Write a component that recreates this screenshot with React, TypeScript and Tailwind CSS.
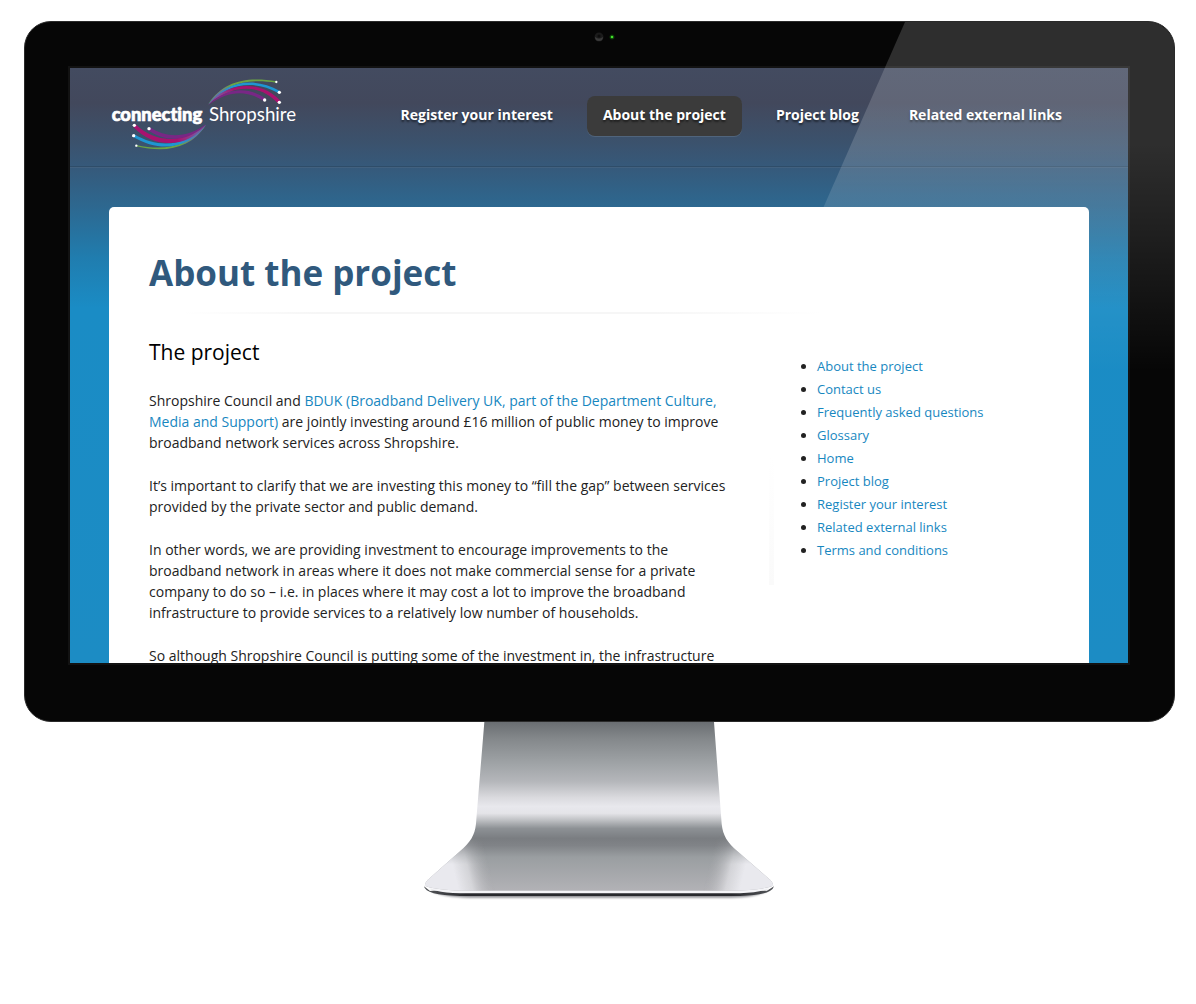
import React from "react";

const navItems = [
  { label: "Register your interest", active: false },
  { label: "About the project", active: true },
  { label: "Project blog", active: false },
  { label: "Related external links", active: false },
];

const sideLinks = [
  "About the project",
  "Contact us",
  "Frequently asked questions",
  "Glossary",
  "Home",
  "Project blog",
  "Register your interest",
  "Related external links",
  "Terms and conditions",
];

function Logo() {
  return (
    <svg viewBox="0 0 630 270" className="h-[90px] w-[210px] shrink-0" role="img" aria-label="connecting Shropshire">
      <defs>
        <linearGradient id="upper" gradientUnits="userSpaceOnUse" x1="325" y1="110" x2="400" y2="60">
          <stop offset="0" stopColor="#6a6d9c" />
          <stop offset="0.4" stopColor="#6c6aa8" stopOpacity="0.8" />
          <stop offset="1" stopColor="#6c6aa8" stopOpacity="0" />
        </linearGradient>
        <linearGradient id="lower" gradientUnits="userSpaceOnUse" x1="318" y1="170" x2="235" y2="225">
          <stop offset="0" stopColor="#6a5e98" />
          <stop offset="0.35" stopColor="#6c6aa8" stopOpacity="0.8" />
          <stop offset="1" stopColor="#6c6aa8" stopOpacity="0" />
        </linearGradient>
      </defs>
      <path d="M325 108 C372 38 440 26 530 40 L529 44 C445 31 378 44 325 108Z" fill="#6ba544" />
      <path d="M325 109 C372 44 455 22 540 69 L536 76 C460 32 380 48 325 109Z" fill="#1e96d2" />
      <path d="M325 110 C375 46 475 30 541 98 L534 106 C475 42 392 52 325 110Z" fill="#a8126f" />
      <path d="M325 111 C378 60 440 52 496 91 L491 99 C440 66 388 66 325 111Z" fill="#782785" />
      <path d="M325 110 C350 74 375 52 400 46 L400 70 C375 74 350 86 325 110Z" fill="url(#upper)" />
      <path d="M318 172 C270 242 200 256 108 235 L109 231 C195 250 262 236 318 172Z" fill="#6ba544" />
      <path d="M318 171 C272 238 185 258 98 206 L103 199 C180 245 262 232 318 171Z" fill="#1e96d2" />
      <path d="M318 170 C268 234 170 250 100 177 L107 169 C170 230 250 224 318 170Z" fill="#a8126f" />
      <path d="M318 169 C270 220 200 226 143 186 L150 178 C200 212 262 210 318 169Z" fill="#782785" />
      <path d="M318 170 C295 205 265 228 235 236 L235 213 C265 208 292 194 318 170Z" fill="url(#lower)" />
      <g fill="#fff">
        <circle cx="529" cy="42" r="3.5" />
        <circle cx="538" cy="73" r="5" />
        <circle cx="538" cy="103" r="5" />
        <circle cx="494" cy="96" r="5" />
        <circle cx="103" cy="172" r="5" />
        <circle cx="147" cy="182" r="5" />
        <circle cx="101" cy="203" r="5" />
        <circle cx="109" cy="233" r="3.5" />
        <text
          x="35"
          y="159"
          stroke="#fff"
          strokeWidth="2"
          className="font-['Lato',sans-serif] text-[55px] font-black [font-variant-ligatures:none]"
        >
          connecting
        </text>
        <text x="327" y="159" className="font-['Lato',sans-serif] text-[56px] font-normal">Shropshire</text>
      </g>
    </svg>
  );
}

function Camera() {
  return (
    <div className="flex h-[46px] items-start justify-center pt-[10px] pl-[11px]" aria-hidden="true">
      <svg viewBox="0 0 30 10" className="h-[10px] w-[30px]">
        <circle cx="9" cy="5" r="4.5" fill="#1b1b1b" />
        <path d="M5 5a4 4 0 0 0 8 0L10 6.500L8 6.500Z" fill="#3a3a3a" />
        <circle cx="9" cy="4" r="1.500" fill="#0c0c0c" />
        <circle cx="22" cy="5" r="2.500" fill="#0d3a08" />
        <circle cx="22" cy="5" r="1.300" fill="#43e02c" />
      </svg>
    </div>
  );
}

function Stand() {
  const outline =
    "M223 33 H912 L934 325 C936 365 945 385 972 412 L1082 508 Q1098 526 1082 540 Q1050 546 1000 546 H135 Q85 546 52 540 Q36 526 52 508 L160 412 C188 385 197 365 199 325Z";
  return (
    <svg viewBox="0 33 1140 567" className="mx-auto block h-[189px] w-[380px]" aria-hidden="true">
      <defs>
        <linearGradient id="metal" gradientUnits="userSpaceOnUse" x1="0" y1="33" x2="0" y2="540">
          <stop offset="0" stopColor="#6a6e72" />
          <stop offset="0.1" stopColor="#84888b" />
          <stop offset="0.25" stopColor="#a0a4a7" />
          <stop offset="0.35" stopColor="#b4b6ba" />
          <stop offset="0.45" stopColor="#dbdbdf" />
          <stop offset="0.5" stopColor="#e8e8ed" />
          <stop offset="0.54" stopColor="#e4e4e8" />
          <stop offset="0.58" stopColor="#bfc1c4" />
          <stop offset="0.63" stopColor="#8d9195" />
          <stop offset="0.69" stopColor="#7a7d81" />
          <stop offset="0.73" stopColor="#808387" />
          <stop offset="0.8" stopColor="#9a9ea1" />
          <stop offset="1" stopColor="#b2b2b6" />
        </linearGradient>
        <linearGradient id="leftShine" gradientUnits="userSpaceOnUse" x1="130" y1="475" x2="235" y2="450">
          <stop offset="0" stopColor="#e9e9ee" />
          <stop offset="0.4" stopColor="#dfdfe3" stopOpacity="0.8" />
          <stop offset="1" stopColor="#b0b0b4" stopOpacity="0" />
        </linearGradient>
        <linearGradient id="rightShine" gradientUnits="userSpaceOnUse" x1="1005" y1="475" x2="900" y2="450">
          <stop offset="0" stopColor="#e9e9ee" />
          <stop offset="0.4" stopColor="#dfdfe3" stopOpacity="0.8" />
          <stop offset="1" stopColor="#b0b0b4" stopOpacity="0" />
        </linearGradient>
        <linearGradient id="shineFade" gradientUnits="userSpaceOnUse" x1="0" y1="375" x2="0" y2="460">
          <stop offset="0" stopColor="#000" />
          <stop offset="1" stopColor="#fff" />
        </linearGradient>
        <mask id="shineMask">
          <rect x="0" y="370" width="1140" height="190" fill="url(#shineFade)" />
        </mask>
        <linearGradient id="edge" x1="0" y1="0" x2="1" y2="0">
          <stop offset="0" stopColor="#55575b" />
          <stop offset="0.12" stopColor="#28292d" />
          <stop offset="0.88" stopColor="#28292d" />
          <stop offset="1" stopColor="#55575b" />
        </linearGradient>
        <clipPath id="standClip">
          <path d={outline} />
        </clipPath>
        <filter id="soft" x="-5%" y="-50%" width="110%" height="200%">
          <feGaussianBlur stdDeviation="3" />
        </filter>
      </defs>
      <path d="M60 538 Q100 560 180 560 H960 Q1040 560 1075 538Z" fill="#8a8b90" filter="url(#soft)" />
      <path d="M42 526 Q46 553 150 555 H990 Q1085 553 1092 526 L1070 540 H60Z" fill="url(#edge)" />
      <path d="M46 520 Q60 545 150 547 H990 Q1080 544 1089 520Z" fill="#f4f4f7" />
      <g clipPath="url(#standClip)">
        <path d="M0 33 H1140 V524 H1090 Q1050 539 960 539 H180 Q85 539 44 524 H0Z" fill="url(#metal)" />
        <g mask="url(#shineMask)">
          <path d="M0 370 H300 V539 H180 Q85 539 44 524 H0Z" fill="url(#leftShine)" />
          <path d="M1140 370 H840 V539 H960 Q1050 539 1090 524 H1140Z" fill="url(#rightShine)" />
        </g>
      </g>
    </svg>
  );
}

export default function App() {
  return (
    <div className="min-h-screen bg-white pt-[21px] pr-[21px] pl-6 font-['Open_Sans',sans-serif]">
      <div className="relative overflow-hidden rounded-[27px] border border-[#2a2a2a] bg-[#060606] pr-[46px] pb-[58px] pl-[45px]">
        <Camera />

        <div className="aspect-[1058/595] overflow-hidden bg-[linear-gradient(#434b60_0px,#42485c_35px,#3b526d_75px,#36597a_98px,#2d6890_139px,#207daf_190px,#1a8cc5_240px,#1c8cc4_100%)] outline-2 outline-[#121212]">
          <header className="flex h-[99px] items-start justify-between border-b border-[#2f4d69] pr-[50px] pl-[30px] shadow-[0_1px_0_#42617f]">
            <Logo />
            <nav className="flex gap-[18px] pt-7">
              {navItems.map((item) => (
                <a
                  key={item.label}
                  href="#"
                  className={
                    item.active
                      ? "h-10 rounded-lg bg-[#3b3b3b] px-4 text-sm leading-[38px] font-bold whitespace-nowrap text-white shadow-[0_1px_0_#50647c] text-shadow-[0_2px_2px_rgba(0,0,0,0.5)]"
                      : "h-10 rounded-lg px-4 text-sm leading-[38px] font-bold whitespace-nowrap text-white text-shadow-[0_2px_2px_rgba(0,0,0,0.5)]"
                  }
                >
                  {item.label}
                </a>
              ))}
            </nav>
          </header>

          <main className="mx-[39px] mt-10 rounded-t-[5px] bg-white px-10 pt-[39px]">
            <h1 className="pb-3 text-[35px] leading-[54px] font-bold text-[#30597d]">About the project</h1>
            <div className="h-[2px] w-[672px] max-w-full bg-[linear-gradient(90deg,transparent_5%,#f6f6f6_25%,#f6f6f6_75%,transparent)]" />

            <div className="flex">
              <article className="w-[580px] text-sm leading-[21px] text-[#222]">
                <h2 className="mt-[22px] mb-[22px] text-[21px] leading-8 text-black">The project</h2>
                <p className="mb-[22px]">
                  Shropshire Council and{" "}
                  <a href="#" className="text-[#1787bf]">
                    BDUK (Broadband Delivery UK, part of the Department Culture, Media and Support)
                  </a>{" "}
                  are jointly investing around £16 million of public money to improve broadband network services across
                  Shropshire.
                </p>
                <p className="mb-[22px]">
                  It’s important to clarify that we are investing this money to “fill the gap” between services provided
                  by the private sector and public demand.
                </p>
                <p className="mb-[22px]">
                  In other words, we are providing investment to encourage improvements to the broadband network in
                  areas where it does not make commercial sense for a private company to do so – i.e. in places where it
                  may cost a lot to improve the broadband infrastructure to provide services to a relatively low number
                  of households.
                </p>
                <p>So although Shropshire Council is putting some of the investment in, the infrastructure</p>
              </article>

              <aside className="ml-10 flex">
                <div className="mt-[143px] h-[128px] w-[5px] bg-[linear-gradient(#ffffff,#fafafa)]" />
                <ul className="mt-[41px] ml-[43px] list-disc text-[13px] leading-[23px] text-[#222]">
                  {sideLinks.map((label) => (
                    <li key={label}>
                      <a href="#" className="text-[#1787bf]">
                        {label}
                      </a>
                    </li>
                  ))}
                </ul>
              </aside>
            </div>
          </main>
        </div>

        {/* Glass reflection across the upper right corner of the display */}
        <div className="pointer-events-none absolute top-0 right-0 h-[350px] w-[423px] bg-[linear-gradient(rgba(255,255,255,0.16)_35%,rgba(255,255,255,0.1)_60%,transparent)] [clip-path:polygon(154px_0,100%_0,100%_100%,0_100%)]" />
      </div>

      <Stand />
    </div>
  );
}
